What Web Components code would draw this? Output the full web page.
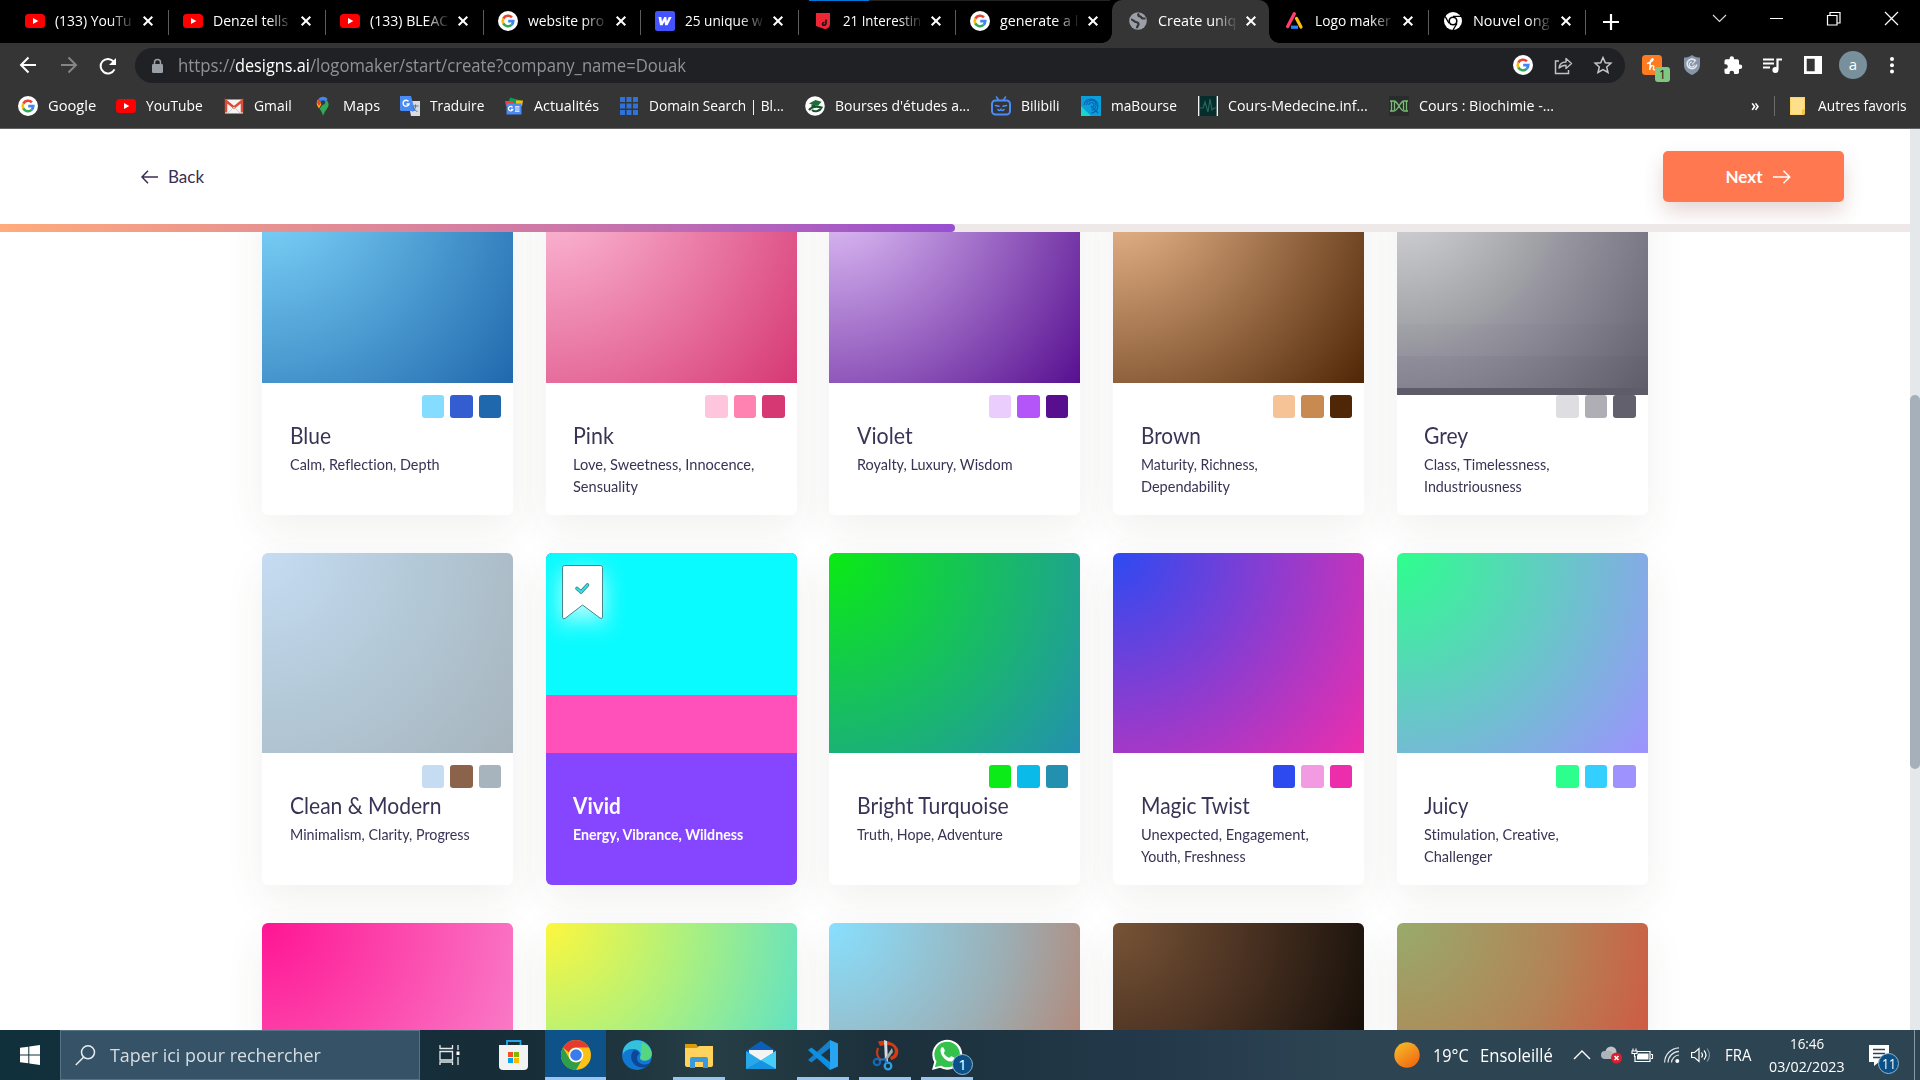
<!DOCTYPE html>
<html lang="fr">
<head>
<meta charset="utf-8">
<title>Create unique logo</title>
<style>
html,body{margin:0;width:1920px;height:1080px;overflow:hidden;background:#fff}
</style>
</head>
<body>
<desktop-screen></desktop-screen>
<script>
const ICONS = {
  youtube:'<rect x="0" y="3" width="20" height="14" rx="3.5" fill="#f00"/><path d="M8 7l5.3 3L8 13z" fill="#fff"/>',
  google:'<circle cx="10" cy="10" r="10" fill="#fff"/><g fill="none" stroke-width="2.6"><path d="M5.3 7.6A5.3 5.3 0 0 1 13.9 6.4" stroke="#ea4335"/><path d="M5.3 12.4a5.3 5.3 0 0 1 0-4.8" stroke="#fbbc05"/><path d="M13.6 13.9a5.3 5.3 0 0 1-8.3-1.5" stroke="#34a853"/><path d="M10.2 10.1h5.1a5.3 5.3 0 0 1-1.7 3.8" stroke="#4285f4"/></g>',
  wtile:'<rect width="20" height="20" rx="2.5" fill="#4353ff"/><path d="M3.500 6h2.800l.7 4.500L9.300 6h2l.6 4.500L13.800 6h2.900l-4.200 8.300h-2.400L9.500 10.500 7.500 14.300H5z" fill="#fff"/>',
  redtag:'<path d="M3 2h14v11c0 3-2.500 5-5.500 5l-8.500-3z" fill="#ee2737"/><path d="M13 8.500v3.800c0 2.600-3.500 2.700-3.500.6 0-1 1-1.600 2-1.300" fill="none" stroke="#111" stroke-width="1.500"/>',
  globe:'<circle cx="10" cy="10" r="8.800" fill="#9aa0a6"/><path d="M3 8.500c2.500 0 3 2.200 5 2.500s2.500 1 2.500 2.200-1.500 2-1.500 4M11 2.500c-1.500 1.500-.5 2.800.8 2.800s1.500 2.200 3.200 2.200h2.500" fill="none" stroke="#35363a" stroke-width="2.200"/>',
  triangle:'<path d="M9.300 2.800L2.700 15.500" stroke="#ff3d6e" stroke-width="3.400" stroke-linecap="round"/><path d="M11.500 7.500l4.500 8.500" stroke="#ffc107" stroke-width="3.200" stroke-linecap="round"/><path d="M6 16.200h7" stroke="#1e88ff" stroke-width="3.200"/>',
  chromeMono:'<circle cx="10" cy="10" r="9" fill="#fff"/><circle cx="10" cy="10" r="4.600" fill="#000"/><circle cx="10" cy="10" r="3" fill="#fff"/><path d="M10 5.400h8M6 12.300L2.200 5.600M14 12.300L10 19" stroke="#000" stroke-width="1.300"/>',
  close:'<path d="M1.700 1.700l8.600 8.600M10.300 1.700l-8.600 8.600" stroke="#fff" stroke-width="2"/>',
  plus:'<path d="M8 0v16M0 8h16" stroke="#fff" stroke-width="2.200"/>',
  wchev:'<path d="M0 1l6.500 6.500L13 1" fill="none" stroke="#ddd" stroke-width="1.100"/>',
  wmin:'<path d="M0 .5h13" stroke="#fff"/>',
  wmax:'<path d="M.5 3.500h9.500v9.500H.5zM3 3V.5h10V11h-2.500" fill="none" stroke="#fff" stroke-width="1.200"/>',
  wclose:'<path d="M0 0l13 13M13 0L0 13" stroke="#fff" stroke-width="1.200"/>',
  back:'<path d="M17 9H2M9.500 1.500L2 9l7.500 7.500" fill="none" stroke="currentColor" stroke-width="2"/>',
  fwd:'<path d="M1 9h15M8.500 1.500L16 9l-7.500 7.500" fill="none" stroke="currentColor" stroke-width="2"/>',
  reload:'<path d="M15.500 12.400A7.300 7.300 0 1 1 14.700 4.700" fill="none" stroke="#fff" stroke-width="2"/><path d="M17 1v7h-7z" fill="#fff"/>',
  lock:'<rect x="0" y="5" width="11" height="9" rx="1.300" fill="#9aa0a6"/><path d="M2.500 6V3.600a3 3 0 0 1 6 0V6" fill="none" stroke="#9aa0a6" stroke-width="1.500"/>',
  share:'<path d="M5 5H1.500v12.500h13V14" fill="none" stroke="#bdc1c6" stroke-width="1.500"/><path d="M5 12c.5-4 3-6 7-6V2.500l5.500 5-5.500 5V9.200c-3 0-5 .8-7 2.800z" fill="none" stroke="#bdc1c6" stroke-width="1.400" stroke-linejoin="round"/>',
  star:'<path d="M9 1.500l2.300 5.200 5.600.5-4.200 3.700 1.300 5.600L9 13.500l-5 3 1.300-5.600L1.100 7.200l5.600-.5z" fill="none" stroke="#c4c7ca" stroke-width="1.500"/>',
  honey:'<rect width="20" height="20" rx="3.500" fill="#ff7b22"/><path d="M5.500 8.500C8 7.500 11.500 5.500 11 4.200S8.500 5 8.300 7.500L7.800 15c.3-3 1.600-4.600 3-4.400s.9 1.600.6 2.800.5 2 1.900 1" fill="none" stroke="#fff" stroke-width="1.400" stroke-linecap="round"/>',
  shield:'<path d="M8 0c2.500 2 5 2.500 8 2.500V10c0 5-3.500 8-8 10-4.500-2-8-5-8-10V2.500C3 2.500 5.500 2 8 0z" fill="#8795a9"/><path d="M11.500 5.600A4.800 4.800 0 1 0 12.700 9.500" fill="none" stroke="#e4e9ef" stroke-width="1.700"/><path d="M12 5L8 9.500M8 7a2.500 2.500 0 1 0 2.300 2.800" fill="none" stroke="#e4e9ef" stroke-width="1.100"/>',
  puzzle:'<path d="M16 8.500h-1V5a1.700 1.700 0 0 0-1.700-1.700H10V2.500a2.200 2.200 0 0 0-4.400 0v.8H2.200A1.700 1.700 0 0 0 .5 5v3.200h1a2.300 2.300 0 0 1 0 4.600h-1v3.500A1.700 1.700 0 0 0 2.200 18h3.300v-1a2.300 2.300 0 0 1 4.600 0v1h3.200a1.700 1.700 0 0 0 1.700-1.700V13h1a2.200 2.200 0 0 0 0-4.500z" fill="#fff"/>',
  queue:'<path d="M0 2.500h11M0 6.500h11M0 10.500h7" stroke="#fff" stroke-width="2"/><path d="M14.500 12.500V2.500h4.500" fill="none" stroke="#fff" stroke-width="2.200"/><circle cx="12.400" cy="13" r="3" fill="#fff"/>',
  panel:'<path d="M0 0h18v18H0zM2.700 2.700v12.600h8V2.700z" fill="#fff" fill-rule="evenodd"/>',
  dots:'<g fill="#fff"><circle cx="2" cy="2" r="2"/><circle cx="2" cy="8.300" r="2"/><circle cx="2" cy="14.600" r="2"/></g>',
  gmail:'<path d="M1 3.500h18v14H1z" fill="#f4f4f4"/><path d="M2 16.500V5l8 6.500L18 5v11.500" fill="none" stroke="#dd4b39" stroke-width="2.500"/><path d="M4 17l6-6 6 6" fill="none" stroke="#ccc"/>',
  maps:'<path d="M10 20c-.8-3.500-2-5.300-3.500-7.200l7-9C17 8 15.500 11 13.500 13.500 12 15.500 11 17 10 20z" fill="#34a853"/><path d="M4.200 9.500A6 6 0 0 1 5 3.500L9 7l-3 5.500z" fill="#fbbc04"/><path d="M5 3.500A6 6 0 0 1 14.700 3l-3.400 3.800z" fill="#4285f4"/><path d="M5 3.200L8 7 6 10 4 7z" fill="#ea4335"/><circle cx="10" cy="6.500" r="2.200" fill="#263c5c"/>',
  translate:'<path d="M8 5h12v15h-9z" fill="#d8dce2"/><path d="M0 0h11l4 15H1.500A1.500 1.500 0 0 1 0 13.500z" fill="#4a8af4"/><path d="M8.500 5.400A3 3 0 1 0 9 8H6.500" fill="none" stroke="#fff" stroke-width="1.400"/><path d="M12.500 10h6M15.500 8.500V10c0 3-2 5-3 5.500M13 11c1 2.500 3 4 4.500 4.500" fill="none" stroke="#607080"/>',
  news:'<path d="M6 1.500l11 3-2 5H4z" fill="#0f9d58"/><path d="M1 5h8v5H2z" fill="#ea4335"/><path d="M12 4.500h7l-1 5.500h-6z" fill="#fbbc05"/><path d="M2.500 7.500h15v11h-15z" fill="#4a8af4"/><path d="M8.500 11.300a2.200 2.200 0 1 0 .3 2H7M11 10.800h4.500M11 13h4.500M11 15.200h4.500" fill="none" stroke="#fff" stroke-width="1.200"/>',
  grid:'<g fill="#2f73d9"><path d="M1 1h5v5H1zM7.500 1h5v5h-5zM14 1h5v5h-5zM1 7.500h5v5H1zM7.500 7.500h5v5h-5zM14 7.500h5v5h-5zM1 14h5v5H1zM7.500 14h5v5h-5zM14 14h5v5h-5z"/></g>',
  bourses:'<circle cx="10" cy="10" r="9.800" fill="#fff"/><path d="M4 7.500L10.500 4l6 1.800-3.500 4-5.500-1z" fill="#1d6f35"/><path d="M6.500 9.500l6.500 1.300M4 14c3-3.500 8-4 12.500-2.500-1.500 3.500-6.500 5-9.500 2.500" fill="none" stroke="#17552b" stroke-width="2.200"/>',
  bilibili:'<rect x="1" y="4.500" width="18" height="14" rx="3.500" fill="none" stroke="#4b8df8" stroke-width="2"/><path d="M5.500 1l2 3M14.500 1l-2 3M4.500 9.500l3.500.8M15.500 9.500l-3.500.8M7 13.500c1 1.500 2.500 1 3 0 .5 1 2 1.500 3 0" fill="none" stroke="#4b8df8" stroke-width="1.600" stroke-linecap="round"/>',
  mabourse:'<path d="M0 0h20v20H0z" fill="#0a9fd8"/><path d="M0 10l10 10H0z" fill="#18d5d0"/><g fill="none" stroke="#0861b5" stroke-width="1.200"><path d="M3 9a7 7 0 1 1 7 8M5.500 9a4.800 4.800 0 1 1 4.800 5M8 9a2.500 2.500 0 1 1 2.500 2.500M10 10l7 7"/></g>',
  medecine:'<path d="M0 0h20v20H0z" fill="#062c2b"/><path d="M.7 0v20M19.300 0v20" stroke="#fff" stroke-width="1.300"/><path d="M2 12h3l2-6 3 10 2-13 2 11 2-2h2" fill="none" stroke="#23675f" stroke-width="1.200"/>',
  dna:'<path d="M0 0h20v20H0z" fill="#2a2b2d"/><path d="M2.500 5v10M17.500 5v10M1 5h4c4 0 6 10 10 10h4M1 15h4c4 0 6-10 10-10h4M5.500 6v8M14.500 6v8" fill="none" stroke="#79bd72" stroke-width="1.300"/>',
  folder:'<path d="M0 0h15v13l-1 5H0z" fill="#fbd465"/><path d="M1 1h13v16H1z" fill="#ffe08a"/><path d="M12 17.500v-5h3v5z" fill="#f2c443"/>',
  arrowL:'<path d="M17 7H1M7 .8L1 7l6 6.200" fill="none" stroke="#3a2e55" stroke-width="1.500"/>',
  arrowR:'<path d="M0 7h16M10.500.8L16.700 7l-6.200 6.200" fill="none" stroke="#fff" stroke-width="1.500"/>',
  ribbon:'<path d="M2.500.5h36a2 2 0 0 1 2 2V52q0 2.500-2.500 1L20.500 40 3 53.500q-2.500 1.200-2.500-1.500V2.500a2 2 0 0 1 2-2z" fill="#fff" stroke="#48878e"/><path d="M15 23.500l4 3.500 6.500-7" fill="none" stroke="#3d858c" stroke-width="3.600" stroke-linecap="round" stroke-linejoin="round"/><path d="M15 23.500l4 3.500 6.500-7" fill="none" stroke="#2fe2e6" stroke-width="1.900" stroke-linecap="round" stroke-linejoin="round"/>',
  windows:'<path d="M0 2.800L8.300 1.700v7.800H0zM9.300 1.500L20 0v9.500H9.300zM0 10.500h8.300v7.800L0 17.200zM9.300 10.500H20V20L9.300 18.500z" fill="#fff"/>',
  search:'<circle cx="13" cy="7.300" r="6.500" fill="none" stroke="#e8edf0" stroke-width="1.500"/><path d="M8.500 12.200L.8 20" stroke="#e8edf0" stroke-width="1.500"/>',
  taskview:'<path d="M1 0v3.500h12.500V0M1 6.500h12.500v8.500H1zM1 20v-3h12.500v3M19 0v5M19 12v8" fill="none" stroke="#e6eaec" stroke-width="1.300"/><path d="M17.500 6.500h3v3.500h-3z" fill="#fff"/>',
  store:'<path d="M8 5.500V1h13.500v4.500" fill="none" stroke="#2ba4e8" stroke-width="1.800"/><path d="M0 5h29v21a4 4 0 0 1-4 4H4a4 4 0 0 1-4-4z" fill="#f3f3f3"/><path d="M9 12h5v5H9z" fill="#f25022"/><path d="M15 12h5v5h-5z" fill="#7fba00"/><path d="M9 18h5v5H9z" fill="#00a4ef"/><path d="M15 18h5v5h-5z" fill="#ffb900"/>',
  chrome:'<circle cx="15" cy="15" r="15" fill="#fbc116"/><path d="M2 7.500A15 15 0 0 1 28 7.500H15a7.500 7.500 0 0 0-7 5z" fill="#e33b2e"/><path d="M2 7.500A15 15 0 0 0 15 30l6.500-11.300A7.500 7.500 0 0 1 8.500 18.800z" fill="#2f9e49"/><circle cx="15" cy="15" r="7.300" fill="#fff"/><circle cx="15" cy="15" r="5.800" fill="#3a7cec"/>',
  edge:'<circle cx="15" cy="15" r="15" fill="#1277d0"/><path d="M1 11C4-3 26-4 29.700 12c.8 6-3 8.500-7 8.500s-5.700-2-4.500-4c1.500-3-1-7-6-7.500C7 8.500 3 10 1 14z" fill="#35c1dc"/><path d="M20 2.500c7 2.500 10 8 9.700 12-.7 5-4.500 6.500-8.200 6-4-.6-3-3-2.700-5 .6-5 .7-9 1.200-13z" fill="#56d67e"/><path d="M12.500 10c-6 4-4 16 7 17.500 4 .5 7-1.500 8-4-7 3-13-1-12.500-6 .2-2.500 1.500-3 2.500-4-1-2.500-3-3.500-5-3.500z" fill="#0c479a"/>',
  explorer:'<path d="M0 1h11l3 4h-14z" fill="#dc9a08"/><path d="M0 5h12l2-2h14v19a2 2 0 0 1-2 2H2a2 2 0 0 1-2-2z" fill="#ffd35c"/><path d="M5 24V16a2 2 0 0 1 2-2h14a2 2 0 0 1 2 2v9h-5v-6h-8v6H5z" fill="#3a98df"/>',
  mail:'<path d="M0 10L15 0l15 10v4H0z" fill="#0c5eb8"/><path d="M3 9h24v12H3z" fill="#f4f4f4"/><path d="M0 10l15 9.500L30 10v18H0z" fill="#28a8e8"/><path d="M15 19.500L30 10v18z" fill="#47cdf8"/><path d="M15 19.500L30 28H0z" fill="#1593e0"/>',
  vscode:'<path d="M22 0l8 3.500v23L22 30z" fill="#27a5f2"/><path d="M22 0v8L3.500 22.500 0 20z" fill="#1580cc"/><path d="M22 30v-8L3.500 7.500 0 10z" fill="#0f8fe0"/>',
  snip:'<path d="M5 1.500C12-1 22 2 25 9c1 5-1 10-7 11l-1-3c4-1 6-5 4-9-3-4-8-3-14-2z" fill="#d83b12"/><path d="M5 8c-2 5-1 9 3 12" fill="none" stroke="#c83a18" stroke-width="2.200"/><path d="M11 0l3 1 1 21h-3z" fill="#d9dce0"/><path d="M19 8l-8 12h3l6-8z" fill="#a3a8ae"/><circle cx="4" cy="22" r="3.200" fill="none" stroke="#1167b8" stroke-width="2.300"/><circle cx="15" cy="26" r="3.300" fill="none" stroke="#2b9fe8" stroke-width="2.300"/><path d="M6 20l6-1 2 4" fill="none" stroke="#1a7bd0" stroke-width="2"/>',
  whatsapp:'<path d="M0 30l2.200-8A15 15 0 1 1 8 27.800z" fill="#fff"/><path d="M2.800 27.200l1.700-5.600A12.800 12.800 0 1 1 9 25.700z" fill="#35c24c"/><path d="M9 8c1-1.200 2.500-1 3 .5l.9 2.300c.2.800-1.300 1.700-1 2.500 1 2.200 3 3.800 5.200 4.500.8.200 1.500-1.800 2.500-1.500l2.600 1.300c1 .7-.5 3.500-2.800 3.900C13.500 22 6.500 13.500 9 8z" fill="#fff"/>',
  sun:'<defs><linearGradient id="s" x1="0" y1="0" x2=".7" y2="1"><stop offset="0" stop-color="#f6c22b"/><stop offset="1" stop-color="#f26a12"/></linearGradient></defs><circle cx="13" cy="13" r="12.700" fill="url(#s)"/>',
  up:'<path d="M0 9l8-8 8 8" fill="none" stroke="#fff" stroke-width="1.400"/>',
  cloud:'<circle cx="9" cy="6" r="5.500" fill="#bfc4c6"/><path d="M3 13a4 4 0 0 1 0-8q7-1 8 3h4v5z" fill="#aeb4b7"/><circle cx="14.500" cy="12" r="5.500" fill="#d8202f"/><path d="M12.500 10l4 4M16.500 10l-4 4" stroke="#fff" stroke-width="1.600"/>',
  battery:'<path d="M5 3.500h13v10H3V8" fill="none" stroke="#fff" stroke-width="1.200"/><path d="M6 5.500h10.500v6H5V8z" fill="#fff"/><path d="M19 6.500h1.500v4H19M1 .5v2.500M4 .5v2.500M0 3h5v2.500H0zM2.500 5v4" fill="none" stroke="#fff" stroke-width="1.100"/>',
  wifi:'<g fill="none" stroke="#dfe5e8" stroke-width="1.200"><path d="M.6 15.500A15 15 0 0 1 15 .8M4 15.500A11.500 11.500 0 0 1 15 4.400M7.500 15.500A8 8 0 0 1 15 8"/></g><circle cx="13.300" cy="14" r="2" fill="#fff"/>',
  sound:'<path d="M.6 5.500h3L8 1.500v13L3.600 10.500h-3z" fill="none" stroke="#fff" stroke-width="1.200"/><path d="M10.500 5.500q2 2.500 0 5M13 3.500q4 4.500 0 9" fill="none" stroke="#fff" stroke-width="1.200"/><path d="M16 1.500q5 6.500 0 13" fill="none" stroke="#82929b" stroke-width="1.200"/>',
  notif:'<path d="M0 0h20v17H10l-5 4v-4H0z" fill="#fff"/><path d="M4 4.500h12M4 8.500h12M4 12.500h8" stroke="#2c4350" stroke-width="1.300"/>'
};
const BASE = '*{box-sizing:border-box}';
function define(name, build){
  customElements.define(name, class extends HTMLElement{
    connectedCallback(){
      if(this.shadowRoot) return;
      this.attachShadow({mode:'open'}).innerHTML = build(this, n=>this.getAttribute(n));
    }
  });
}
const ic=(n,w,h,s='')=>`<ui-icon name="${n}" w="${w}" h="${h||w}" style="${s}"></ui-icon>`;
const t=(text,w,s='')=>`<fit-text w="${w}" style="${s}">${text}</fit-text>`;

define('ui-icon',(e,a)=>`<style>:host{display:block;flex:none;width:${a('w')}px;height:${a('h')}px}svg{display:block;overflow:visible}</style><svg width="${a('w')}" height="${a('h')}">${ICONS[a('name')]}</svg>`);

/* One line of text, condensed or widened to an exact advance width. */
customElements.define('fit-text', class extends HTMLElement{
  connectedCallback(){
    if(this.shadowRoot) return;
    const w=+this.getAttribute('w');
    this.attachShadow({mode:'open'}).innerHTML=`<style>:host{display:block;flex:none;width:${w}px;white-space:pre}span{display:inline-block;transform-origin:0 50%}</style><span><slot></slot></span>`;
    const s=this.shadowRoot.querySelector('span');
    const n=s.offsetWidth;
    if(n) s.style.transform=`scaleX(${w/n})`;
  }
});

define('browser-tab',(e,a)=>`<style>${BASE}
:host{display:flex;align-items:center;flex:none;width:157.500px;height:43px;padding:0 0 1px 16px;position:relative;color:#fff}
:host([active]){background:#353535;border-radius:10px 10px 0 0}
:host([active])::before,:host([active])::after{content:"";position:absolute;bottom:0;width:10px;height:10px;background:radial-gradient(circle at 0 0,transparent 9.500px,#353535 10px);left:-10px}
:host([active])::after{left:auto;right:-10px;background:radial-gradient(circle at 100% 0,transparent 9.500px,#353535 10px)}
.s{width:1px;height:25px;background:#5c5c5c;margin:2px -2px 0 auto}
.t{margin-left:10px;width:79px;line-height:22px;margin-top:-2px;-webkit-mask-image:linear-gradient(90deg,#000 70%,transparent 102%)}
</style>${ic(a('icon'),20)}<div class="t"><fit-text w="${a('w')}"><slot></slot></fit-text></div>${ic('close',12,12,'margin-left:8px')}${e.hasAttribute('sep')?'<div class="s"></div>':''}`);

const TABS=[['youtube','(133) YouTu',77],['youtube','Denzel tells',75],['youtube','(133) BLEAC',78],['google','website pro',76],['wtile','25 unique w',78],['redtag','21 Interestin',78],['google','generate a l',78],['globe','Create uniq',78],['triangle','Logo maker',76],['chromeMono','Nouvel ong',76]];
define('tab-strip',()=>`<style>${BASE}:host{display:flex;align-items:center;height:43px;background:#000;padding-left:9px;font:15px "Open Sans",sans-serif;position:relative}
.load{position:absolute;left:809px;top:0;width:301px;height:1px;background:linear-gradient(90deg,#0078d7 60px,#222 60px)}
.win{display:flex;align-items:center;margin-left:auto;padding-right:22px;height:37px;align-self:flex-start}
</style><div class="load"></div>${TABS.map((x,i)=>`<browser-tab icon="${x[0]}" w="${x[2]}" ${i==7?'active':i!=6?'sep':''}>${x[1]}</browser-tab>`).join('')}${ic('plus',16,16,'margin-left:19px')}<div class="win">${ic('wchev',13,9,'margin-right:44px')}${ic('wmin',13,1,'margin-right:44px')}${ic('wmax',13,14,'margin-right:45px')}${ic('wclose',13)}</div>`);

define('address-bar',()=>`<style>${BASE}:host{display:flex;align-items:center;height:44px;background:#353535;padding-left:19px;color:#fff;font:18px/26px "Open Sans",sans-serif}
.o{display:flex;align-items:center;width:1490px;height:35px;border-radius:18px;background:#202124;margin-left:18px;padding:0 13px 0 17px;color:#8f9296}
.b{display:block;position:relative;margin-left:17px}
.n{position:absolute;left:13px;top:12px;width:15px;height:15px;border-radius:3px;background:#81c784;color:#111;font:12px/15px "Open Sans";text-align:center}
.av{width:28px;height:28px;border-radius:50%;background:#78909c;text-align:center;font:15px/26px "Open Sans";margin-left:17px}
</style>${ic('back',17,18)}${ic('fwd',17,18,'margin-left:24px;color:#858585')}${ic('reload',17,17,'margin:0 1px 0 22px')}
<div class="o">${ic('lock',11,14,'margin-top:1px')}${t('https://',57,'margin-left:15px')}${t('designs.ai',75,'color:#fff')}${t('/logomaker/start/create?company_name=Douak',376)}${ic('google',20,20,'margin-left:auto')}${ic('share',18,18,'margin-left:21px')}${ic('star',18,18,'margin-left:22px')}</div>
<div class="b">${ic('honey',20)}<div class="n">1</div></div>${ic('shield',16,20,'margin-left:22px')}${ic('puzzle',18,18,'margin-left:24px')}${ic('queue',19,16,'margin-left:21px')}${ic('panel',18,18,'margin-left:22px')}<div class="av">a</div>${ic('dots',4,17,'margin-left:23px')}`);

const MARKS=[['google','Google',48,98],['youtube','YouTube',57,107.500],['gmail','Gmail',38,89.500],['maps','Maps',37,87],['translate','Traduire',54,104],['news','Actualités',65,115],['grid','Domain Search | Bl...',135,186],['bourses',"Bourses d'études a...",135,186],['bilibili','Bilibili',39,90],['mabourse','maBourse',66,117],['medecine','Cours-Medecine.inf...',140,191],['dna','Cours : Biochimie -...',135,165]];
define('bookmark-bar',()=>`<style>${BASE}:host{box-sizing:border-box;display:flex;align-items:center;height:42px;background:#353535;border-bottom:1px solid #626262;padding:0 13px 3px 18px;color:#fff;font:15px/22px "Open Sans",sans-serif}
.m{display:flex;align-items:center;gap:10px;flex:none}fit-text{position:relative;top:-1px}
.q{margin-left:auto;margin-right:15px}.s{width:1px;height:20px;background:#6b6b6b;margin-right:15px}
</style>${MARKS.map(m=>`<div class="m" style="width:${m[3]}px">${ic(m[0],20)}${t(m[1],m[2])}</div>`).join('')}<div class="q">${t('»',8,'font-weight:600;font-size:17px')}</div><div class="s"></div>${ic('folder',15,18,'margin-right:13px')}${t('Autres favoris',89)}`);

define('page-header',()=>`<style>${BASE}:host{display:flex;flex-direction:column;background:#fff;position:relative;z-index:2;font:17px/24px Lato,sans-serif;color:#3a2e55}
.h{display:flex;align-items:center;justify-content:space-between;height:95px;padding:0 66px 0 141px}
.k{display:flex;align-items:center;gap:10px}
.n{display:flex;align-items:center;justify-content:center;gap:10px;width:181px;height:51px;border-radius:5px;background:#ff784f;color:#fff;font-weight:700;box-shadow:0 10px 20px rgba(130,60,50,.2);padding-left:8px}
.p{height:8px;background:#eee8e8}.f{height:8px;width:955px;border-radius:0 4px 4px 0;background:linear-gradient(90deg,#ffab7b,#c974aa 62%,#984fd0)}
</style><div class="h"><div class="k">${ic('arrowL',17,14)}${t('Back',36)}</div><div class="n">${t('Next',37)}${ic('arrowR',17,14)}</div></div><div class="p"><div class="f"></div></div>`);

define('palette-card',(e,a)=>{
  const c=a('colors').split(' '), d=(a('desc')||'').split('|').filter(Boolean), v=e.hasAttribute('selected'), strip=e.hasAttribute('strip');
  return `<style>${BASE}:host{display:block;width:251px;height:332px;border-radius:6px;background:${v?'#8645ff':'#fff'};box-shadow:0 14px 42px rgba(60,60,40,.07);position:relative;color:${v?'#fff':'#3a3355'};font:15px/22px Lato,sans-serif;font-variant-ligatures:none}
.i{height:${strip?205:200}px;border-radius:6px 6px 0 0;background:${a('bg')};position:relative}
.x{height:7px;background:#5e5c68;margin-bottom:-12px}
.s{display:flex;justify-content:flex-end;gap:6px;height:23px;margin:12px 12px 0 0;position:relative}.s div{width:22.500px;border-radius:3px}
.c{padding:4px 0 0 27.500px}h3{margin:0 0 3px;font-weight:${v?700:400};font-size:22.500px;line-height:28px}
.d{font-weight:${v?700:400}}
.r{position:absolute;left:16px;top:12px;filter:drop-shadow(0 8px 11px rgba(255,255,255,.75))}
</style><div class="i">${v?`<div class="r">${ic('ribbon',41,55)}</div>`:''}</div>${strip?'<div class="x"></div>':''}
<div class="s">${v?'':c.map(x=>`<div style="background:${x}"></div>`).join('')}</div>
<div class="c">${a('name')?`<h3>${t(a('name'),a('nw'))}</h3>`:''}<div class="d">${d.map(x=>{const[y,w]=x.split('~');return t(y,w)}).join('')}</div></div>`;
});
const rg=(...s)=>`radial-gradient(circle at 0 0,${s.join(',')})`;
const CARDS=[
['Blue',41,'Calm, Reflection, Depth~150',rg('#84dcff','#2068ad'),'#84dcff #355dd2 #2068ad'],
['Pink',41,'Love, Sweetness, Innocence,~181|Sensuality~65',rg('#ffc3dc','#d63874'),'#ffc5dd #ff82b0 #d63874'],
['Violet',56,'Royalty, Luxury, Wisdom~156',rg('#eacdff','#570f90'),'#eacdfc #b355f8 #570f90'],
['Brown',60,'Maturity, Richness,~117|Dependability~89',rg('#f7c396','#4f2606'),'#f6c396 #c98a51 #4f2606'],
['Grey',44,'Class, Timelessness,~126|Industriousness~98','linear-gradient(transparent 69%,rgba(65,60,85,.03) 69%,rgba(65,60,85,.03) 84.500%,rgba(65,60,85,.09) 84.500%),'+rg('#dedee2','#a0a1a5 47%','#9795a0 54%','#62606c'),'#dedee2 #afaeb4 #62606c','strip'],
['Clean &amp; Modern',151.500,'Minimalism, Clarity, Progress~180',rg('#c5dcf3','#b3c8d6 50%','#a7b4bd'),'#c5dcf3 #8b634b #a7b4bd'],
['Vivid',48,'Energy, Vibrance, Wildness~170','linear-gradient(#0afbff 142px,#ff51b9 142px)','#fff','selected'],
['Bright Turquoise',151.500,'Truth, Hope, Adventure~146',rg('#0aeb13','#2490b0'),'#0aeb17 #0abae9 #2490b0'],
['Magic Twist',109,'Unexpected, Engagement,~168|Youth, Freshness~105',rg('#2c4af2','#ed2ead'),'#2c4af0 #f29be3 #ec2ead'],
['Juicy',44,'Stimulation, Creative,~135|Challenger~68',rg('#2dff8d','#9e92ff'),'#2dff8d #33d0ff #9e92ff'],
['',0,'',rg('#ff1493','#f97fc9 90%','#f97fc9'),'#fff'],
['',0,'',rg('#fdf73d','#aaf080 45%','#55dfcf 92%'),'#fff'],
['',0,'',rg('#87e0ff','#9caeb4 55%','#b68370 92%'),'#fff'],
['',0,'',rg('#785436','#4f3524 38%','#130d08 88%'),'#fff'],
['',0,'',rg('#98ab6b','#b28457 50%','#d4533f 92%'),'#fff']];
define('palette-grid',()=>`<style>:host{display:block;flex:1;min-height:0;overflow:hidden;background:#fff}
.g{display:grid;grid-template-columns:repeat(5,251px);column-gap:32.700px;row-gap:38px;margin:-49px 0 0 262px}</style><div class="g">${CARDS.map(c=>`<palette-card name="${c[0]}" nw="${c[1]}" desc="${c[2]}" bg="${c[3]}" colors="${c[4]}" ${c[5]||''}></palette-card>`).join('')}</div>`);
define('scroll-bar',()=>`<style>:host{display:block;width:10px;background:#e4e8eb;padding-top:266px;box-sizing:border-box}div{height:374px;border-radius:5px;background:#a5b0ba}</style><div></div>`);
define('web-page',()=>`<style>:host{display:flex;flex:1;min-height:0}.c{display:flex;flex-direction:column;flex:1;min-width:0}</style><div class="c"><page-header></page-header><palette-grid></palette-grid></div><scroll-bar></scroll-bar>`);

const APPS=[['store',29,30,'',64],['chrome',30,30,'act',61],['edge',30,30,'',62],['explorer',28,25,'run',62],['mail',30,28,'',62],['vscode',30,30,'run',62],['snip',26,30,'run',62],['whatsapp',30,30,'run',62]];
define('task-bar',()=>`<style>${BASE}:host{display:flex;align-items:center;height:50px;background:linear-gradient(90deg,#10303b 0,#172d38 28%,#263e46 37%,#1b303b 46%,#23394a 60%,#2d4453 70%,#2d4452 100%);color:#fff;font:18px/24px "Open Sans",sans-serif}
.st{width:60px;display:flex;justify-content:center}
.se{display:flex;align-items:center;width:360px;height:50px;border:1px solid #557384;background:#355266;padding-left:14px;color:#d7dee3}
.a{position:relative;display:flex;align-items:center;justify-content:center;width:62px;height:50px;flex:none}
.run::after,.act::after{content:"";position:absolute;left:5px;right:5px;bottom:0;height:3px;background:#9cc4f0}.act{background:#0d5288}.act::after{left:0;right:0}
.bd{position:absolute;width:21px;height:21px;border-radius:50%;border:1px solid #8db4d2;background:#0c5088;text-align:center;font:15px/18px "Open Sans"}
.ck{display:flex;flex-direction:column;align-items:center;font-size:15px;line-height:23px;margin-left:18px;width:76px}
.n{position:relative;margin-left:24px}.end{width:1px;height:50px;background:#8799a2;margin-left:25px}
</style><div class="st">${ic('windows',20)}</div><div class="se">${ic('search',20,20)}${t('Taper ici pour rechercher',211,'margin-left:15px;font-size:19px')}</div>${ic('taskview',21,20,'margin:0 21px 0 19px')}
${APPS.map(p=>`<div class="a ${p[3]}" style="width:${p[4]}px">${ic(p[0],p[1],p[2],p[0]=='snip'?'margin-left:2px':'')}${p[0]=='whatsapp'?'<div class="bd" style="left:36px;top:24px">1</div>':''}</div>`).join('')}
<div style="flex:1"></div>${ic('sun',26)}${t('19°C',36,'margin-left:13px')}${t('Ensoleillé',73,'margin-left:11px')}${ic('up',16,10,'margin-left:21px')}${ic('cloud',20,18,'margin-left:12px')}${ic('battery',20,15,'margin-left:10px')}${ic('wifi',16,16,'margin-left:12px')}${ic('sound',19,16,'margin-left:11px')}${t('FRA',26,'margin-left:15px;font-size:15.500px')}<div class="ck">${t('16:46',34)}${t('03/02/2023',76)}</div><div class="n">${ic('notif',20,21)}<div class="bd" style="left:9px;top:8px">${t('11',14,'margin-left:2.500px')}</div></div><div class="end"></div><div style="width:5px"></div>`);
define('desktop-screen',()=>`<style>:host{display:flex;flex-direction:column;width:1920px;height:1080px;overflow:hidden}</style><tab-strip></tab-strip><address-bar></address-bar><bookmark-bar></bookmark-bar><web-page></web-page><task-bar></task-bar>`);
</script>
</body>
</html>
